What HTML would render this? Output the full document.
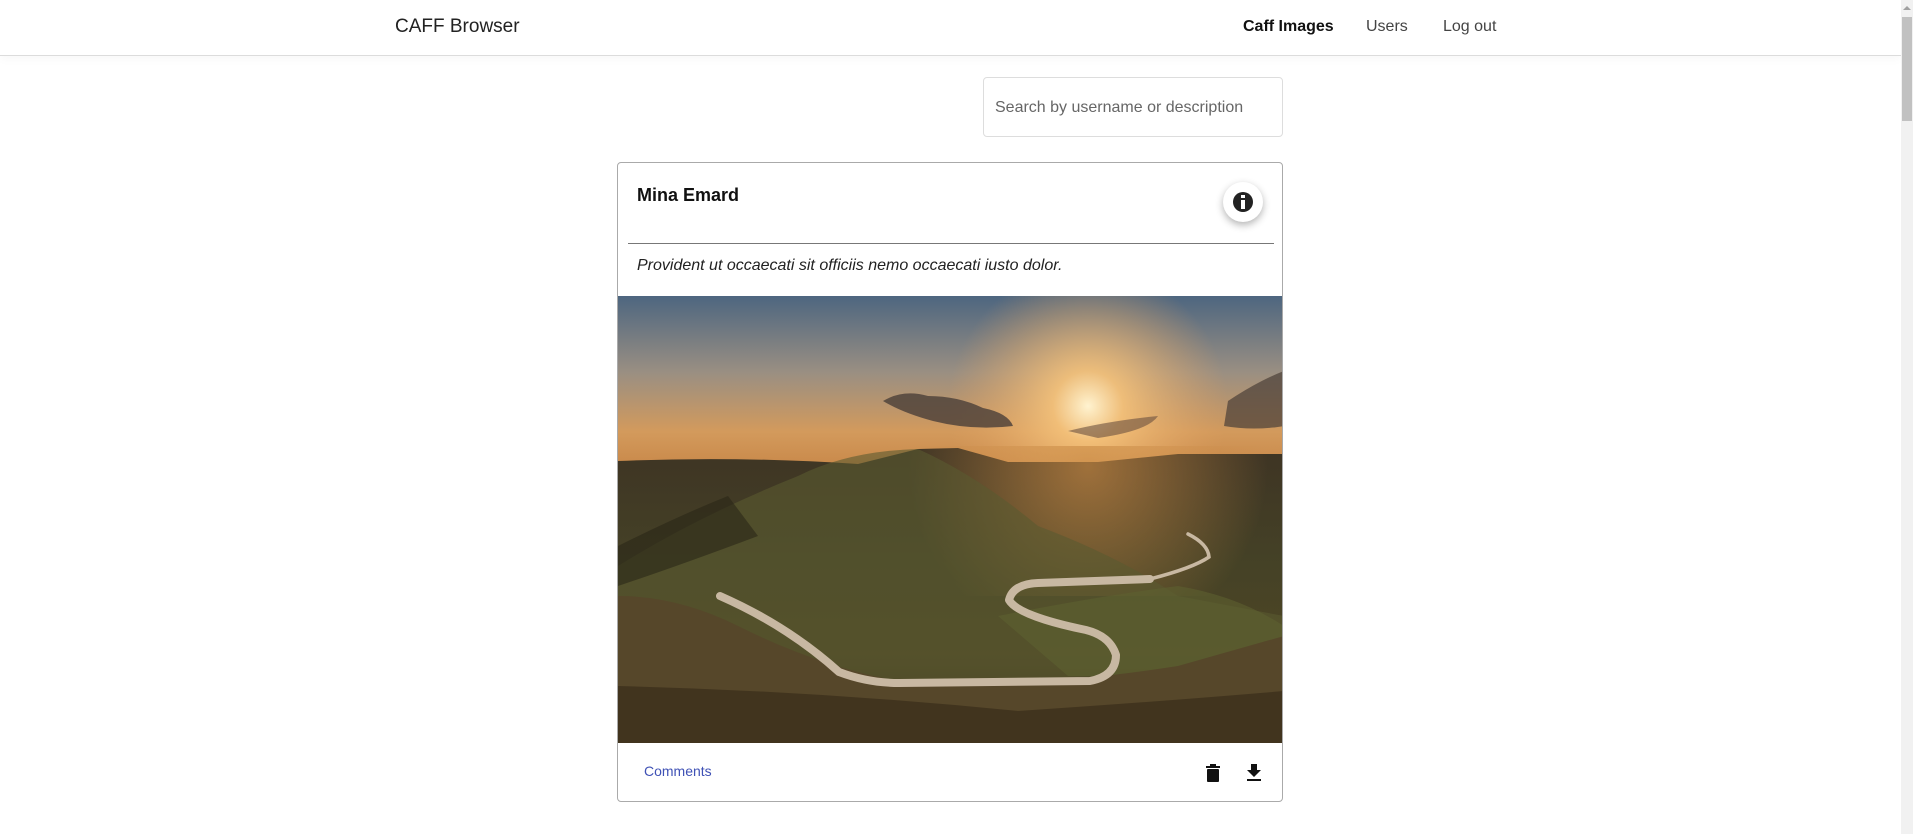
<!DOCTYPE html>
<html><head><meta charset="utf-8"><style>
*{margin:0;padding:0;box-sizing:border-box}
body{width:1913px;height:834px;overflow:hidden;background:#fff;font-family:"Liberation Sans",Roboto,sans-serif;position:relative}
.hdr{position:absolute;left:0;top:0;width:1901px;height:56px;background:#fff;border-bottom:1px solid #dcdcdc;box-shadow:0 2px 10px rgba(0,0,0,.04)}
.brand{position:absolute;left:395px;top:16px;font-size:19px;color:#222}
.nav{position:absolute;top:18px;font-size:16px;color:#444}
.sb{position:absolute;right:0;top:0;width:12px;height:834px;background:#f1f1f1}
.thumb{position:absolute;right:1px;top:17px;width:10px;height:104px;background:#c1c1c1}
.search{position:absolute;left:983px;top:77px;width:300px;height:60px;border:1px solid #ddd;border-radius:4px;font-size:16px;color:#666;padding:21px 0 0 11px}
.card{position:absolute;left:617px;top:162px;width:666px;height:640px;border:1px solid #aaa;border-radius:4px;overflow:hidden;background:#fff}
.name{position:absolute;left:19px;top:22px;font-size:18px;font-weight:bold;color:#111}
.ib{position:absolute;left:605px;top:19px;width:40px;height:40px;border-radius:50%;background:#fff;box-shadow:0 3px 8px rgba(0,0,0,.3)}
.ib:after{content:"";position:absolute;left:10px;top:10px;width:20px;height:20px;border-radius:50%;background:#222}
.ib i{position:absolute;left:18px;top:18px;width:4px;height:9px;background:#fff;z-index:2}
.ib b{position:absolute;left:18px;top:13px;width:4px;height:3px;background:#fff;z-index:2}
.hr{position:absolute;left:10px;top:80px;width:646px;height:1px;background:#777}
.desc{position:absolute;left:19px;top:94px;font-size:16px;font-style:italic;color:#222}
.img{position:absolute;left:0;top:133px;width:666px;height:447px}
.cm{position:absolute;left:26px;top:600px;font-size:14px;color:#3f51b5}
</style></head><body>
<div class="hdr">
<div class="brand">CAFF Browser</div>
<div class="nav" style="left:1243px;font-weight:bold;color:#111">Caff Images</div>
<div class="nav" style="left:1366px">Users</div>
<div class="nav" style="left:1443px">Log out</div>
</div>
<div class="sb"><div class="thumb"></div><div style="position:absolute;left:2px;top:6px;width:0;height:0;border-left:4px solid transparent;border-right:4px solid transparent;border-bottom:4px solid #a0a0a0"></div></div>
<div class="search">Search by username or description</div>
<div class="card">
<div class="name">Mina Emard</div>
<div class="ib"><b></b><i></i></div>
<div class="hr"></div>
<div class="desc">Provident ut occaecati sit officiis nemo occaecati iusto dolor.</div>
<svg class="img" viewBox="0 0 666 447" preserveAspectRatio="none">
<defs>
<linearGradient id="sky" x1="0" y1="0" x2="0" y2="1"><stop offset="0" stop-color="#4d6680"/><stop offset=".45" stop-color="#9a8f82"/><stop offset=".8" stop-color="#d39a5c"/><stop offset="1" stop-color="#c9894a"/></linearGradient>
<radialGradient id="sun" cx="470" cy="110" r="140" gradientUnits="userSpaceOnUse"><stop offset="0" stop-color="#fff3d0"/><stop offset=".25" stop-color="#f5c27a" stop-opacity=".9"/><stop offset="1" stop-color="#e0a060" stop-opacity="0"/></radialGradient>
<linearGradient id="land" x1="0" y1="0" x2="0" y2="1"><stop offset="0" stop-color="#3e3424"/><stop offset=".4" stop-color="#454226"/><stop offset=".7" stop-color="#4e4524"/><stop offset="1" stop-color="#33291a"/></linearGradient>
<radialGradient id="glow" cx="470" cy="170" r="180" gradientUnits="userSpaceOnUse"><stop offset="0" stop-color="#c98a45" stop-opacity=".7"/><stop offset="1" stop-color="#c98a45" stop-opacity="0"/></radialGradient>
</defs>
<rect width="666" height="170" fill="url(#sky)"/>
<rect width="666" height="170" fill="url(#sun)"/>
<path d="M265 105 q20 -12 45 -5 q30 0 55 12 q25 5 30 18 q-40 5 -80 -5 q-30 -8 -50 -20z" fill="#4a3e38" opacity=".8"/>
<path d="M610 105 q30 -20 56 -30 v55 q-30 5 -60 0z" fill="#4a3e38" opacity=".7"/>
<path d="M450 135 q40 -10 90 -15 q-10 15 -60 22z" fill="#6a5040" opacity=".6"/>
<path d="M0 170 L0 165 Q120 160 240 168 L300 153 L340 152 L390 166 L480 166 L560 158 L666 158 L666 447 L0 447Z" fill="url(#land)"/>
<rect y="150" width="666" height="150" fill="url(#glow)"/>
<path d="M0 270 Q80 220 180 180 Q230 155 300 153 Q360 180 420 230 Q500 260 560 300 L666 320 L666 447 L0 447Z" fill="#5a5a30" opacity=".6"/>
<path d="M0 250 Q60 220 110 200 L140 240 Q60 270 0 290Z" fill="#2a2618" opacity=".6"/>
<path d="M380 320 Q480 300 560 290 Q620 300 666 330 L666 380 L450 380Z" fill="#5e6030" opacity=".6"/>
<path d="M0 300 Q60 300 120 330 Q200 370 280 385 Q400 395 560 370 L666 340 L666 447 L0 447Z" fill="#56472a"/>
<path d="M0 390 Q200 395 400 415 Q550 405 666 395 L666 447 L0 447Z" fill="#3c2f1b" opacity=".8"/>
<path d="M102 300 Q170 330 221 376 Q250 387 281 387 L472 385 Q498 380 498 359 Q492 340 468 334 Q400 320 391 304 Q395 288 420 287 L532 283" fill="none" stroke="#c8b8a2" stroke-width="8" stroke-linecap="round" stroke-linejoin="round"/>
<path d="M532 283 Q575 272 591 261 Q590 248 570 238" fill="none" stroke="#c8b8a2" stroke-width="3.5" stroke-linecap="round"/>
</svg>
<div class="cm">Comments</div>
<svg style="position:absolute;left:588px;top:601px" width="14" height="18" viewBox="0 0 14 18"><rect x="0" y="2" width="14" height="2" fill="#111"/><rect x="4" y="0" width="6" height="2" fill="#111"/><rect x="1" y="5" width="12" height="13" rx="1" fill="#111"/></svg>
<svg style="position:absolute;left:629px;top:601px" width="14" height="17" viewBox="0 0 14 17"><path d="M4 0h6v6h4l-7 7-7-7h4z" fill="#111"/><rect y="15" width="14" height="2" fill="#111"/></svg>
</div>
</body></html>
